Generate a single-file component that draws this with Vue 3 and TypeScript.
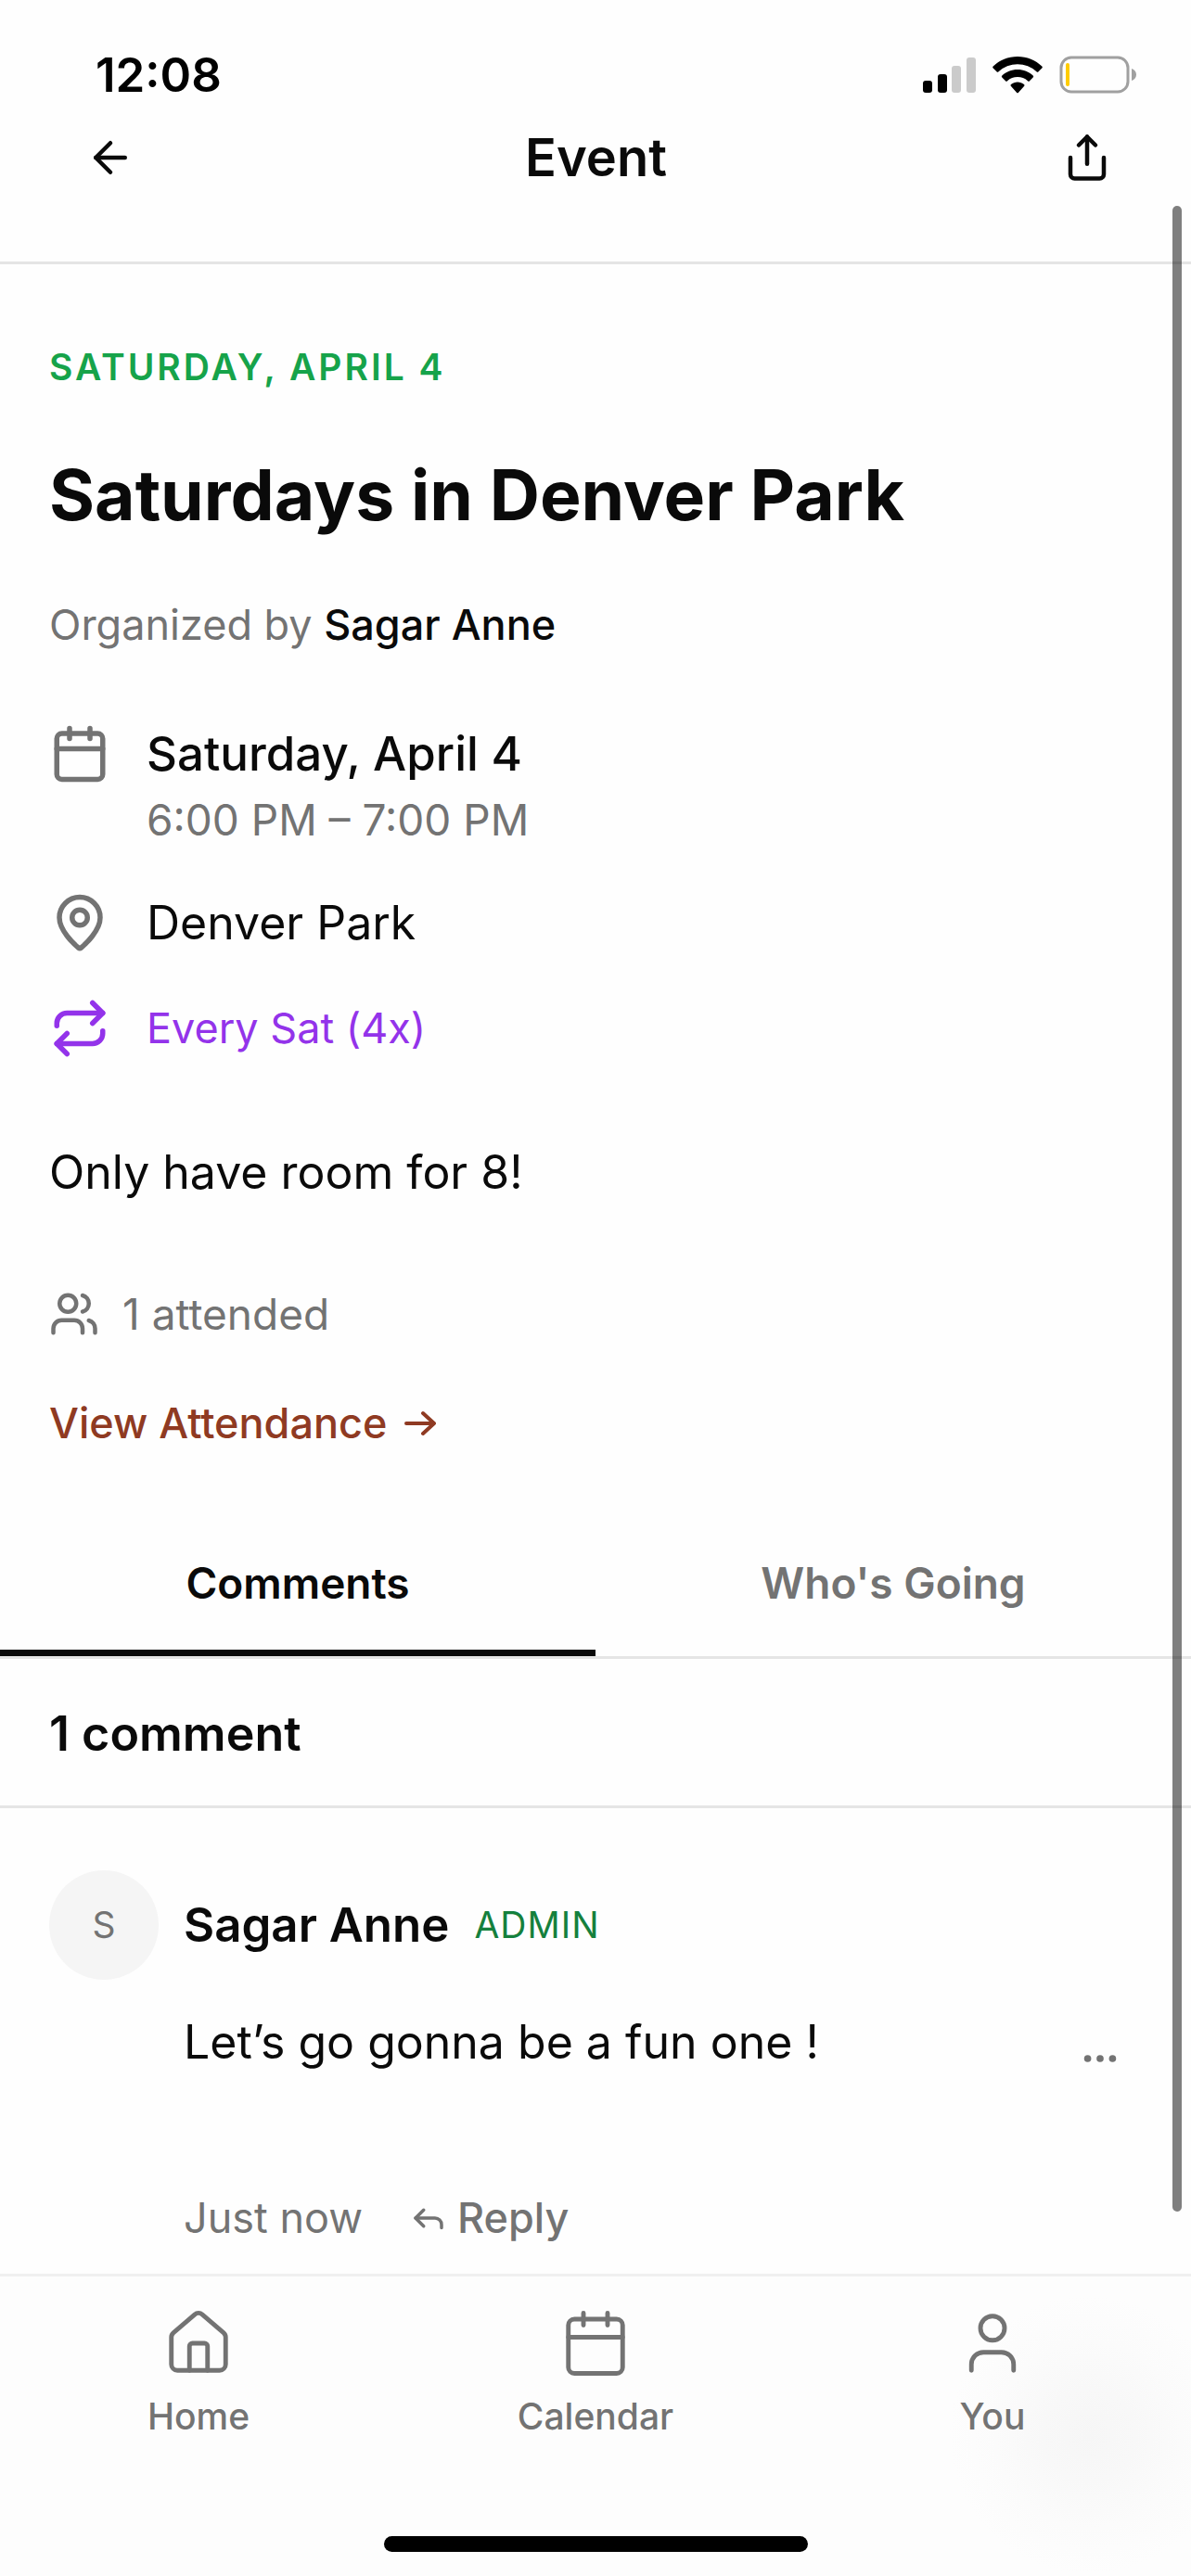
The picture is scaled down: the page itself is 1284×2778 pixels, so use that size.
<script setup lang="ts">
import { ref } from 'vue'

type TabId = 'comments' | 'going'

const tabs: { id: TabId; label: string }[] = [
  { id: 'comments', label: 'Comments' },
  { id: 'going', label: "Who's Going" },
]
const activeTab = ref<TabId>('comments')
</script>

<template>
  <div class="screen">
    <div class="status">
      <span class="time">12:08</span>
      <div class="indicators">
        <svg class="signal" width="57" height="40" viewBox="0 0 57 40" aria-hidden="true">
          <rect x="0" y="26" width="10" height="13" rx="3" />
          <rect x="16" y="19" width="10" height="20" rx="3" />
          <rect x="31" y="10" width="10" height="29" rx="3" fill="#cbcbcb" />
          <rect x="47" y="1" width="10" height="38" rx="3" fill="#cbcbcb" />
        </svg>
        <svg width="54" height="40" viewBox="0 0 54 40" aria-hidden="true">
          <path d="M27 0C37 0 46.500 4 53.300 10.500a1.400 1.400 0 0 1 0 2L49.500 16.300a1.400 1.400 0 0 1-2 0A30 30 0 0 0 6.500 16.300a1.400 1.400 0 0 1-2 0L.7 12.500a1.400 1.400 0 0 1 0-2C7.500 4 17 0 27 0z" />
          <path d="M27 14C33.500 14 39.300 16.400 43.700 20.500a1.400 1.400 0 0 1 0 2L40 26.300a1.400 1.400 0 0 1-2 0A16.500 16.500 0 0 0 16 26.300a1.400 1.400 0 0 1-2 0L10.300 22.500a1.400 1.400 0 0 1 0-2C14.700 16.400 20.500 14 27 14z" />
          <path d="M27 27.500c2.600 0 5 .9 7 2.500a1.300 1.300 0 0 1 0 2L28 38.800a1.400 1.400 0 0 1-2 0L20 32a1.300 1.300 0 0 1 0-2c2-1.600 4.400-2.500 7-2.500z" />
        </svg>
        <svg width="84" height="42" viewBox="0 0 84 42" aria-hidden="true">
          <rect x="2" y="2" width="72" height="37" rx="11" fill="none" stroke="#a0a0a0" stroke-width="3" />
          <rect x="7" y="8" width="4" height="25" rx="2" fill="#ffcc00" />
          <path d="M78 14c3 1 5 3.500 5 6.500s-2 5.500-5 6.500z" fill="#a0a0a0" />
        </svg>
      </div>
    </div>

    <header class="topbar">
      <button class="icon-button" type="button" aria-label="Back">
        <svg class="icon small" viewBox="0 0 24 24"><path d="m12 19-7-7 7-7" /><path d="M19 12H5" /></svg>
      </button>
      <h1 class="screen-title">Event</h1>
      <button class="icon-button" type="button" aria-label="Share">
        <svg class="icon small" viewBox="0 0 24 24">
          <path d="M4 12v8a2 2 0 0 0 2 2h12a2 2 0 0 0 2-2v-8" /><path d="m16 6-4-4-4 4" /><path d="M12 2v13" />
        </svg>
      </button>
    </header>

    <main>
      <section class="event">
        <p class="eyebrow">SATURDAY, APRIL 4</p>
        <h2 class="event-title">Saturdays in Denver Park</h2>
        <p class="organizer">Organized by <strong>Sagar Anne</strong></p>

        <ul class="details">
          <li>
            <svg class="icon medium" viewBox="0 0 24 24" aria-hidden="true">
              <path d="M8 2v4M16 2v4M3 10h18" /><rect x="3" y="4" width="18" height="18" rx="2" />
            </svg>
            <div>
              <p class="detail-date">Saturday, April 4</p>
              <p class="detail-time">6:00 PM – 7:00 PM</p>
            </div>
          </li>
          <li>
            <svg class="icon medium" viewBox="0 0 24 24" aria-hidden="true">
              <path d="M20 10c0 4.993-5.539 10.193-7.399 11.799a1 1 0 0 1-1.202 0C9.539 20.193 4 14.993 4 10a8 8 0 0 1 16 0" />
              <circle cx="12" cy="10" r="3" />
            </svg>
            <p class="detail-place">Denver Park</p>
          </li>
          <li class="recurring">
            <svg class="icon medium" viewBox="0 0 24 24" aria-hidden="true">
              <path d="m17 2 4 4-4 4" /><path d="M3 11v-1a4 4 0 0 1 4-4h14" />
              <path d="m7 22-4-4 4-4" /><path d="M21 13v1a4 4 0 0 1-4 4H3" />
            </svg>
            <p class="detail-repeat">Every Sat (4x)</p>
          </li>
        </ul>

        <p class="description">Only have room for 8!</p>

        <p class="attended">
          <svg class="icon small" viewBox="0 0 24 24" aria-hidden="true">
            <path d="M16 21v-2a4 4 0 0 0-4-4H6a4 4 0 0 0-4 4v2" /><circle cx="9" cy="7" r="4" />
            <path d="M22 21v-2a4 4 0 0 0-3-3.870" /><path d="M16 3.130a4 4 0 0 1 0 7.750" />
          </svg>
          <span>1 attended</span>
        </p>

        <a class="attendance" href="#attendance">
          <span>View Attendance</span>
          <svg width="36" height="28" viewBox="0 0 36 28" aria-hidden="true"><path d="M3 14h30M21 3l12 11-12 11" /></svg>
        </a>
      </section>

      <div class="tabs" role="tablist">
        <button
          v-for="tab in tabs"
          :key="tab.id"
          type="button"
          role="tab"
          class="tab"
          :class="{ active: tab.id === activeTab }"
          :aria-selected="tab.id === activeTab"
          @click="activeTab = tab.id"
        >{{ tab.label }}</button>
      </div>

      <h3 class="count">1 comment</h3>

      <article class="comment">
        <div class="comment-head">
          <span class="avatar">S</span>
          <span class="author">Sagar Anne</span>
          <span class="role">ADMIN</span>
        </div>
        <div class="comment-body">
          <p>Let’s go gonna be a fun one !</p>
          <button class="icon-button more" type="button" aria-label="More options">
            <svg width="46" height="46" viewBox="0 0 24 24">
              <circle cx="5" cy="12" r="2" /><circle cx="12" cy="12" r="2" /><circle cx="19" cy="12" r="2" />
            </svg>
          </button>
        </div>
        <div class="comment-meta">
          <span>Just now</span>
          <button class="reply" type="button">
            <svg class="icon tiny" viewBox="0 0 24 24" aria-hidden="true"><path d="m9 17-5-5 5-5" /><path d="M20 18v-2a4 4 0 0 0-4-4H4" /></svg>
            Reply
          </button>
        </div>
      </article>
    </main>

    <footer class="bottom">
      <nav class="nav">
        <a href="#home">
          <svg class="icon large" viewBox="0 0 24 24" aria-hidden="true">
            <path d="M15 21v-8a1 1 0 0 0-1-1h-4a1 1 0 0 0-1 1v8" />
            <path d="M3 10a2 2 0 0 1 .709-1.528l7-5.999a2 2 0 0 1 2.582 0l7 5.999A2 2 0 0 1 21 10v9a2 2 0 0 1-2 2H5a2 2 0 0 1-2-2z" />
          </svg>
          <span>Home</span>
        </a>
        <a href="#calendar">
          <svg class="icon large" viewBox="0 0 24 24" aria-hidden="true">
            <path d="M8 2v4M16 2v4M3 10h18" /><rect x="3" y="4" width="18" height="18" rx="2" />
          </svg>
          <span>Calendar</span>
        </a>
        <a href="#you">
          <svg class="icon large" viewBox="0 0 24 24" aria-hidden="true">
            <path d="M19 21v-2a4 4 0 0 0-4-4H9a4 4 0 0 0-4 4v2" /><circle cx="12" cy="7" r="4" />
          </svg>
          <span>You</span>
        </a>
      </nav>
      <div class="home-indicator"></div>
    </footer>

    <div class="scroll-thumb" aria-hidden="true"></div>
  </div>
</template>

<style>
body {
  margin: 0;
  background: #fff;
}
</style>

<style scoped>
.screen {
  position: relative;
  display: flex;
  flex-direction: column;
  min-height: 100vh;
  background: #fefefe;
  color: #0a0a0a;
  font-family: Inter, "Liberation Sans", sans-serif;
  font-size: 45px;
  line-height: 60px;
}
p, h1, h2, h3, ul {
  margin: 0;
  padding: 0;
}
ul {
  list-style: none;
}
button {
  padding: 0;
  border: 0;
  background: none;
  color: inherit;
  font: inherit;
}
a {
  color: inherit;
  text-decoration: none;
}
svg {
  display: block;
  flex: none;
}
.icon {
  fill: none;
  stroke: currentColor;
  stroke-width: 2;
  stroke-linecap: round;
  stroke-linejoin: round;
}
.tiny { width: 42px; height: 42px; }
.small { width: 54px; height: 54px; }
.medium { width: 66px; height: 66px; }
.large { width: 78px; height: 78px; stroke-width: 1.5; }

.status {
  display: flex;
  align-items: center;
  justify-content: space-between;
  padding: 51px 58px 0 103px;
  color: #000;
}
.time {
  font-size: 51px;
  font-weight: 600;
}
.indicators {
  display: flex;
  align-items: center;
  gap: 18px;
}
.topbar {
  display: flex;
  align-items: center;
  padding: 29px 85px 82px 92px;
  border-bottom: 3px solid #e5e5e5;
}
.screen-title {
  flex: 1;
  padding-right: 6px;
  text-align: center;
  font-size: 56px;
  font-weight: 600;
}

.event {
  display: flex;
  flex-direction: column;
  align-items: flex-start;
  padding: 84px 53px 68px;
}
.eyebrow {
  color: #16a34a;
  font-size: 39px;
  font-weight: 600;
  line-height: 54px;
  letter-spacing: 3px;
}
.event-title {
  margin-top: 63px;
  font-size: 75px;
  font-weight: 700;
  line-height: 96px;
}
.organizer {
  margin-top: 62px;
  color: #737373;
}
.organizer strong {
  color: #0a0a0a;
  font-weight: 500;
}
.details {
  display: flex;
  flex-direction: column;
  gap: 48px;
  margin-top: 76px;
}
.details li {
  display: flex;
  gap: 39px;
  color: #737373;
}
.detail-date {
  color: #0a0a0a;
  font-size: 51px;
  font-weight: 500;
  line-height: 66px;
}
.detail-time {
  margin-top: 8px;
  font-size: 46px;
}
.detail-place {
  color: #0a0a0a;
  font-size: 50px;
  line-height: 66px;
}
.details .recurring {
  color: #9333ea;
}
.detail-repeat {
  line-height: 66px;
}
.description {
  margin-top: 84px;
  font-size: 50px;
  line-height: 76px;
}
.attended {
  display: flex;
  align-items: center;
  gap: 25px;
  margin-top: 85px;
  color: #737373;
  font-size: 46px;
}
.attendance {
  display: flex;
  align-items: center;
  gap: 18px;
  margin-top: 58px;
  color: #8f3a22;
  font-weight: 500;
}
.attendance path {
  fill: none;
  stroke: currentColor;
  stroke-width: 4;
  stroke-linecap: round;
  stroke-linejoin: round;
}

.tabs {
  display: flex;
  border-bottom: 3px solid #e5e5e5;
}
.tab {
  flex: 1;
  padding: 44px 0 42px;
  border-bottom: 7px solid transparent;
  color: #737373;
  font-size: 46px;
  font-weight: 600;
}
.tab.active {
  border-bottom-color: #0a0a0a;
  color: #0a0a0a;
}
.count {
  padding: 48px 53px 44px;
  border-bottom: 3px solid #e5e5e5;
  font-size: 52px;
  font-weight: 600;
  line-height: 66px;
}
.comment {
  padding: 67px 53px 30px;
}
.comment-head {
  display: flex;
  align-items: center;
  gap: 27px;
}
.avatar {
  display: flex;
  align-items: center;
  justify-content: center;
  width: 118px;
  height: 118px;
  border-radius: 50%;
  background: #f5f5f5;
  color: #737373;
  font-size: 39px;
}
.author {
  font-size: 51px;
  font-weight: 600;
}
.role {
  color: #15803d;
  font-size: 39px;
  letter-spacing: 1px;
}
.comment-body {
  display: flex;
  align-items: flex-start;
  justify-content: space-between;
  margin-top: 34px;
  padding: 0 22px 0 145px;
  font-size: 50px;
  line-height: 66px;
}
.more {
  fill: #737373;
  padding-top: 28px;
}
.comment-meta {
  display: flex;
  align-items: center;
  gap: 50px;
  margin-top: 119px;
  padding-left: 145px;
  color: #737373;
}
.reply {
  display: flex;
  align-items: center;
  gap: 10px;
  font-weight: 500;
}

.bottom {
  margin-top: auto;
  border-top: 3px solid #f0f0f0;
  background: radial-gradient(circle at 1174px 171px, #f6f6f6 0, #f8f8f8 50px, #fbfbfb 100px, #fdfdfd 150px);
}
.nav {
  display: flex;
  padding-top: 33px;
}
.nav a {
  flex: 1;
  display: flex;
  flex-direction: column;
  align-items: center;
  gap: 16px;
  color: #737373;
  font-size: 39px;
  font-weight: 500;
  line-height: 48px;
}
.home-indicator {
  width: 457px;
  height: 17px;
  margin: 105px auto 26px;
  border-radius: 9px;
  background: #000;
}
.scroll-thumb {
  position: absolute;
  top: 222px;
  right: 10px;
  bottom: 393px;
  width: 10px;
  border-radius: 5px;
  background: rgba(0, 0, 0, 0.5);
}
</style>
